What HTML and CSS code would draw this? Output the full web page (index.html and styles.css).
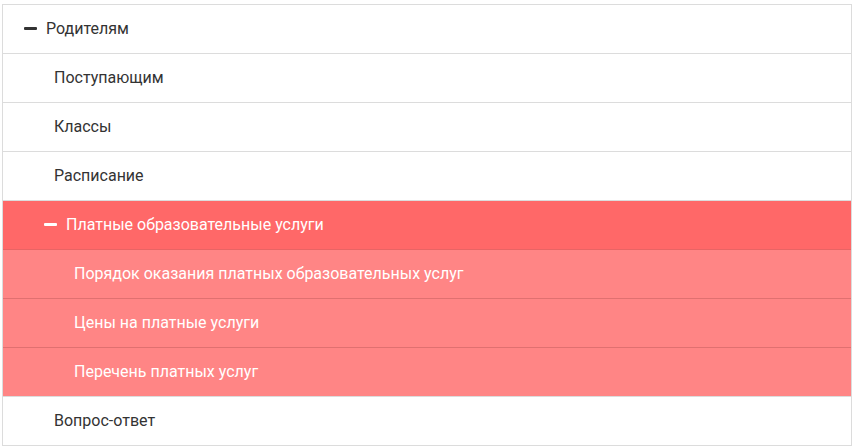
FILE: index.html
```html
<!DOCTYPE html>
<html lang="ru">
<head>
<meta charset="utf-8">
<link rel="stylesheet" href="styles.css">
</head>
<body>
<ul class="menu">
  <li class="item lvl1 open"><span class="dash"></span>Родителям</li>
  <li class="item lvl2">Поступающим</li>
  <li class="item lvl2">Классы</li>
  <li class="item lvl2">Расписание</li>
  <li class="item lvl2 active open"><span class="dash"></span>Платные образовательные услуги</li>
  <li class="item lvl3 sub">Порядок оказания платных образовательных услуг</li>
  <li class="item lvl3 sub">Цены на платные услуги</li>
  <li class="item lvl3 sub">Перечень платных услуг</li>
  <li class="item lvl2">Вопрос-ответ</li>
</ul>
</body>
</html>
```
FILE: styles.css
```css
html, body {
  margin: 0;
  padding: 0;
  background: #fff;
}
body {
  font-family: Roboto, "Noto Sans", sans-serif;
}
.menu {
  list-style: none;
  margin: 4px 0 0 2px;
  padding: 0;
  width: 850px;
  box-sizing: border-box;
  border-left: 1px solid #dcdcdc;
  border-right: 1px solid #dcdcdc;
  border-top: 1px solid #dcdcdc;
}
.item {
  display: flex;
  align-items: center;
  height: 48px;
  box-sizing: border-box;
  padding-bottom: 2px;
  border-bottom: 1px solid #dcdcdc;
  font-size: 16px;
  color: #333;
}
.item { height: 49px; }
.lvl1 { padding-left: 21px; }
.lvl2 { padding-left: 51px; }
.lvl3 { padding-left: 71px; }
.active.lvl2 { padding-left: 41px; }
.dash {
  display: inline-block;
  width: 13px;
  height: 3px;
  border-radius: 1px;
  background: #333;
  margin-right: 9px;
}
.active {
  background: #ff6868;
  color: #fff;
  border-bottom-color: #e86464;
}
.active .dash { background: #fff; }
.sub {
  background: #ff8585;
  color: #fff;
  border-bottom-color: #e07070;
}
.sub:nth-last-child(2) {
  border-bottom-color: #dcdcdc;
}
```
